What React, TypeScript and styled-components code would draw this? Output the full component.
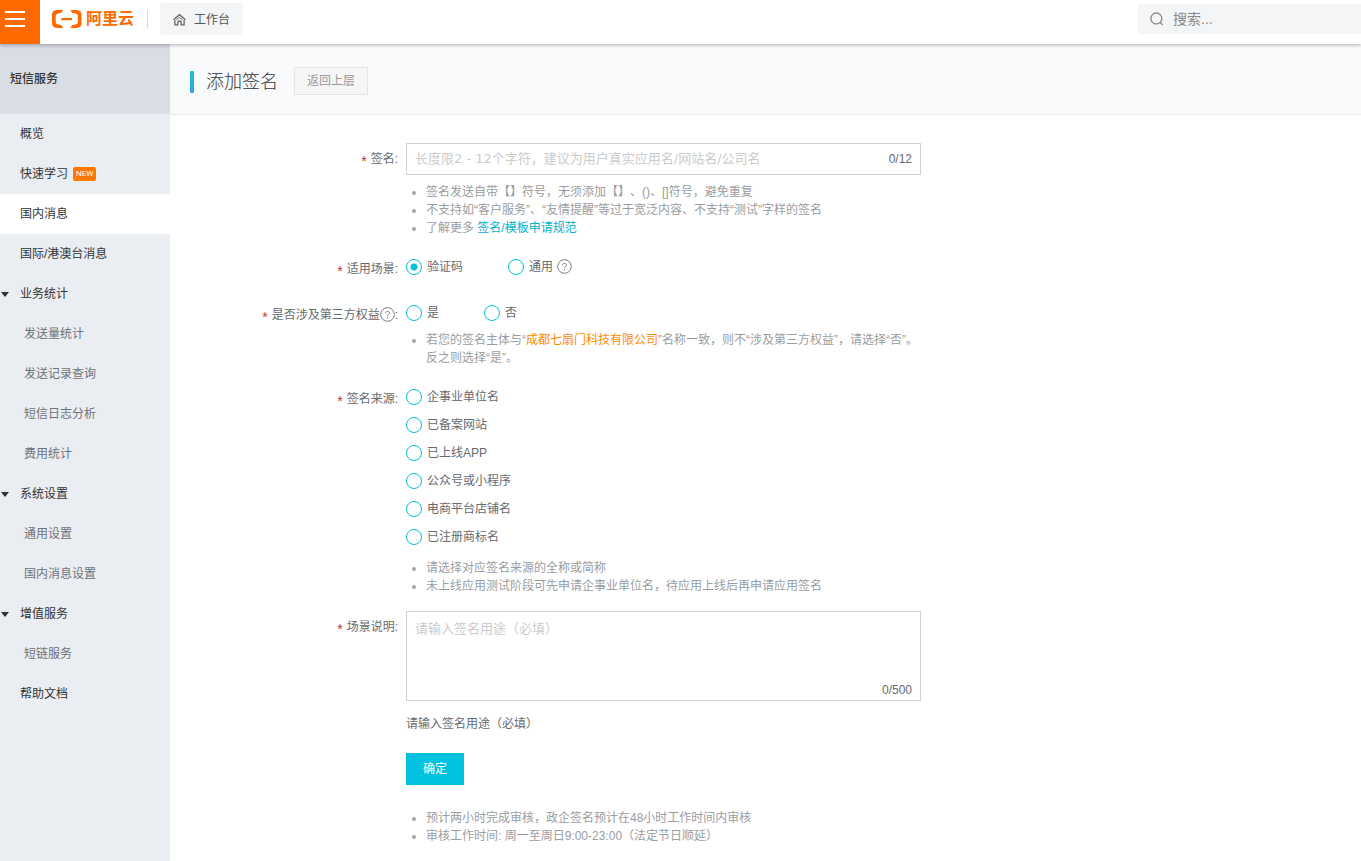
import React, { useState } from "react";
import styled, { createGlobalStyle } from "styled-components";

const GlobalStyle = createGlobalStyle`
  * { box-sizing: border-box; }
  body {
    margin: 0;
    background: #fff;
    color: #666a6e;
    font: 12px/18px "Liberation Sans", "Noto Sans CJK SC", sans-serif;
    text-spacing-trim: space-all;
  }
  button, input, textarea { font: inherit; color: inherit; letter-spacing: inherit; }
  ul { list-style: none; margin: 0; padding: 0; }
  a { text-decoration: none; }
`;

const Page = styled.div`
  display: flex;
  flex-direction: column;
  min-height: 100vh;
`;

const TopBar = styled.header`
  position: relative;
  z-index: 1;
  display: flex;
  align-items: flex-start;
  height: 44px;
  background: #fff;
  box-shadow: 0 1px 4px rgba(0, 0, 0, 0.3);
`;

const MenuButton = styled.button`
  display: flex;
  flex-direction: column;
  gap: 5px;
  width: 40px;
  height: 44px;
  padding: 11px 15px 0 5px;
  border: 0;
  background: #ff6a00;
`;

const MenuBar = styled.span`
  height: 2px;
  background: #fff;
`;

const Logo = styled.a`
  display: flex;
  align-items: center;
  gap: 4px;
  height: 38px;
  margin-left: 12px;
  color: #ff6a00;
  font-size: 16px;
  font-weight: 700;
`;

const Divider = styled.span`
  width: 1px;
  height: 18px;
  margin: 10px 12px 0 13px;
  background: #d5d8db;
`;

const WorkbenchButton = styled.button`
  display: flex;
  align-items: center;
  gap: 8px;
  height: 32px;
  margin-top: 3px;
  padding: 1px 13px 0;
  border: 0;
  border-radius: 2px;
  background: #f4f5f7;
  color: #555;
`;

const SearchBox = styled.label`
  display: flex;
  align-items: center;
  gap: 9px;
  width: 223px;
  height: 30px;
  margin: 4px 0 0 auto;
  padding-left: 12px;
  background: #f4f5f7;
  color: #888;
  font-size: 14px;
`;

const SearchInput = styled.input`
  flex: 1;
  min-width: 0;
  padding: 0;
  border: 0;
  outline: 0;
  background: none;
  &::placeholder { color: #888; opacity: 1; }
`;

const Body = styled.div`
  display: flex;
  flex: 1;
`;

const Sidebar = styled.nav`
  flex: none;
  width: 170px;
  background: #eaedf2;
`;

const SidebarTitle = styled.h2`
  margin: 0;
  height: 70px;
  padding-left: 10px;
  background: #d9dde4;
  color: #333;
  font-size: 12px;
  font-weight: 500;
  line-height: 70px;
`;

type Kind = "page" | "group" | "sub";

const NavLink = styled.a<{ $kind: Kind; $active?: boolean }>`
  display: flex;
  align-items: center;
  height: 40px;
  padding-left: ${(p) => (p.$kind === "page" ? 20 : p.$kind === "sub" ? 24 : 1)}px;
  background: ${(p) => (p.$active ? "#fff" : "transparent")};
  color: ${(p) => (p.$kind === "sub" ? "#6d7277" : "#333")};
`;

const Caret = styled.span`
  margin-right: 11px;
  border: 4px solid transparent;
  border-top: 5px solid #333;
  border-bottom: 0;
`;

const NewBadge = styled.span`
  margin-left: 5px;
  padding: 0 3px;
  border-radius: 2px;
  background: #ff7800;
  color: #fff;
  font-family: Roboto, sans-serif;
  font-size: 8px;
  line-height: 14px;
`;

const Main = styled.main`
  flex: 1;
  min-width: 0;
`;

const PageHeader = styled.div`
  display: flex;
  align-items: center;
  height: 71px;
  padding: 4px 20px 0;
  border-bottom: 1px solid #ebecee;
  background: #f9fafc;
`;

const Title = styled.h1`
  display: flex;
  align-items: center;
  gap: 12px;
  margin: 0 16px 0 0;
  padding-top: 2px;
  color: #333;
  font-size: 18px;
  font-weight: 300;
  line-height: 26px;
  &::before {
    content: "";
    width: 4px;
    height: 22px;
    border-radius: 1px;
    background: linear-gradient(#1cc2d8, #2f9ff0);
  }
`;

const BackButton = styled.button`
  height: 28px;
  padding: 0 12px;
  border: 1px solid #e4e5e6;
  background: #f6f6f6;
  color: #999;
`;

const Form = styled.form`
  display: flex;
  flex-direction: column;
  gap: 16px;
  padding: 28px 20px 16px 0;
`;

const Row = styled.div`
  display: grid;
  grid-template-columns: 228px minmax(0, 515px);
  column-gap: 8px;
  align-items: start;
`;

const RowLabel = styled.div`
  display: flex;
  align-items: center;
  justify-content: flex-end;
  height: 30px;
  padding-top: 2px;
`;

const Required = styled.span`
  margin-right: 4px;
  padding-top: 4px;
  color: #c8321e;
  font-size: 14px;
`;

const Controls = styled.div`
  grid-column: 2;
`;

const Field = styled.div<{ $multi?: boolean }>`
  display: flex;
  flex-direction: ${(p) => (p.$multi ? "column" : "row")};
  align-items: ${(p) => (p.$multi ? "stretch" : "center")};
  height: ${(p) => (p.$multi ? 90 : 32)}px;
  padding: ${(p) => (p.$multi ? "8px 8px 0" : "0 8px")};
  border: 1px solid #cfd2d5;
`;

const placeholderText = `
  flex: 1;
  min-width: 0;
  padding: 0;
  border: 0;
  outline: 0;
  background: none;
  font-family: "DejaVu Sans", "Noto Sans CJK SC", sans-serif;
  font-size: 13px;
  &::placeholder { color: #ccc; opacity: 1; }
`;

const TextInput = styled.input`${placeholderText}`;
const TextArea = styled.textarea`
  ${placeholderText}
  resize: none;
`;

const Counter = styled.span`
  align-self: flex-end;
  line-height: 20px;
  ${Field} > input + & { align-self: center; }
`;

const HintList = styled.ul<{ $gap: number }>`
  margin-top: ${(p) => p.$gap}px;
  color: #999da1;
`;

const HintItem = styled.li`
  display: flex;
  &::before {
    content: "";
    flex: none;
    width: 4px;
    height: 4px;
    margin: 8px 10px 0 6px;
    border-radius: 50%;
    background: #a3a7aa;
  }
`;

const HintLink = styled.a`
  color: #00b1ce;
`;

const Company = styled.span`
  color: #ff8a00;
`;

const RadioGroup = styled.div<{ $vertical?: boolean }>`
  display: flex;
  flex-direction: ${(p) => (p.$vertical ? "column" : "row")};
  column-gap: 45px;
`;

const RadioLabel = styled.label`
  display: flex;
  align-items: center;
  height: 28px;
`;

const RadioInput = styled.input`
  appearance: none;
  width: 16px;
  height: 16px;
  margin: 0 5px 0 0;
  border: 1px solid #00c1de;
  border-radius: 50%;
  background: #fff;
  &:checked { background: radial-gradient(circle, #00c1de 3px, #fff 4px); }
`;

const HelpMark = styled.svg<{ $spaced?: boolean }>`
  flex: none;
  margin: 0 0 2px ${(p) => (p.$spaced ? 4 : 0)}px;
`;

const Note = styled.p`
  margin: 14px 0 20px;
`;

const SubmitButton = styled.button`
  display: block;
  height: 32px;
  padding: 0 17px;
  border: 0;
  background: #00c1de;
  color: #fff;
`;

const HelpIcon = ({ spaced }: { spaced?: boolean }) => (
  <HelpMark $spaced={spaced} width="15" height="15" viewBox="0 0 15 15" fill="none" stroke="#777b7f">
    <circle cx="7.5" cy="7.5" r="6.8" />
    <path d="M5.5 6.2c0-1.3.9-2 2-2s2 .7 2 1.8c0 1.4-2 1.5-2 3M7.5 10v1.2" />
  </HelpMark>
);

const Hints = ({ items, gap = 8 }: { items: React.ReactNode[]; gap?: number }) => (
  <HintList $gap={gap}>
    {items.map((item, i) => (
      <HintItem key={i}>
        <span>{item}</span>
      </HintItem>
    ))}
  </HintList>
);

interface RadiosProps {
  name: string;
  label: string;
  options: string[];
  initial?: string;
  vertical?: boolean;
  helpOn?: string;
}

const Radios = ({ name, label, options, initial = "", vertical, helpOn }: RadiosProps) => {
  const [value, setValue] = useState(initial);
  return (
    <RadioGroup role="radiogroup" aria-label={label} $vertical={vertical}>
      {options.map((o) => (
        <RadioLabel key={o}>
          <RadioInput type="radio" name={name} checked={value === o} onChange={() => setValue(o)} />
          {o}
          {helpOn === o && <HelpIcon spaced />}
        </RadioLabel>
      ))}
    </RadioGroup>
  );
};

const nav: { text: string; kind: Kind; active?: boolean; isNew?: boolean }[] = [
  { text: "概览", kind: "page" },
  { text: "快速学习", kind: "page", isNew: true },
  { text: "国内消息", kind: "page", active: true },
  { text: "国际/港澳台消息", kind: "page" },
  { text: "业务统计", kind: "group" },
  { text: "发送量统计", kind: "sub" },
  { text: "发送记录查询", kind: "sub" },
  { text: "短信日志分析", kind: "sub" },
  { text: "费用统计", kind: "sub" },
  { text: "系统设置", kind: "group" },
  { text: "通用设置", kind: "sub" },
  { text: "国内消息设置", kind: "sub" },
  { text: "增值服务", kind: "group" },
  { text: "短链服务", kind: "sub" },
  { text: "帮助文档", kind: "page" },
];

export default function App() {
  const [sign, setSign] = useState("");
  const [usage, setUsage] = useState("");
  return (
    <Page>
      <GlobalStyle />
      <TopBar>
        <MenuButton type="button" aria-label="菜单">
          <MenuBar />
          <MenuBar />
          <MenuBar />
        </MenuButton>
        <Logo href="#">
          <svg width="30" height="20" viewBox="0 0 30 20" fill="#ff6a00">
            <path d="M11 1H5Q0 1.200 0 6V14Q0 18.800 5 19H11L9.600 16.200 5.300 15.200Q3.700 14.800 3.700 13.200V6.800Q3.700 5.200 5.300 4.800L9.600 3.800Z" />
            <path d="M18.500 1H24.500Q29.500 1.200 29.500 6V14Q29.500 18.800 24.500 19H18.500L19.900 16.200 24.200 15.200Q25.800 14.800 25.800 13.200V6.800Q25.800 5.200 24.200 4.800L19.900 3.800Z" />
            <path d="M9.500 9h10.500v2.200H9.500z" />
          </svg>
          阿里云
        </Logo>
        <Divider />
        <WorkbenchButton type="button">
          <svg width="13" height="13" viewBox="0 0 13 13" fill="none" stroke="#666" strokeWidth="1.3">
            <path d="M.5 6.800 6.500 1.700l6 5.100" />
            <path d="M1.900 7v4.900h2.900V9.500Q4.800 8 6.500 8t1.700 1.500v2.400h2.900V7" />
            <path d="M3.300 6.900 6.500 4.300l3.200 2.600" strokeWidth="1" />
          </svg>
          工作台
        </WorkbenchButton>
        <SearchBox>
          <svg width="14" height="14" viewBox="0 0 14 14" fill="none" stroke="#888" strokeWidth="1.3">
            <circle cx="6.3" cy="6.5" r="5.5" />
            <path d="m10.300 10.500 2.500 2.500" />
          </svg>
          <SearchInput type="search" placeholder="搜索..." aria-label="搜索" />
        </SearchBox>
      </TopBar>
      <Body>
        <Sidebar>
          <SidebarTitle>短信服务</SidebarTitle>
          <ul>
            {nav.map((n) => (
              <li key={n.text}>
                <NavLink href="#" $kind={n.kind} $active={n.active}>
                  {n.kind === "group" && <Caret />}
                  {n.text}
                  {n.isNew && <NewBadge>NEW</NewBadge>}
                </NavLink>
              </li>
            ))}
          </ul>
        </Sidebar>
        <Main>
          <PageHeader>
            <Title>添加签名</Title>
            <BackButton type="button">返回上层</BackButton>
          </PageHeader>
          <Form onSubmit={(e) => e.preventDefault()}>
            <Row>
              <RowLabel>
                <Required>*</Required>
                <label htmlFor="sign">签名:</label>
              </RowLabel>
              <Controls>
                <Field>
                  <TextInput
                    id="sign"
                    maxLength={12}
                    value={sign}
                    onChange={(e) => setSign(e.target.value)}
                    placeholder="长度限2 - 12个字符，建议为用户真实应用名/网站名/公司名"
                  />
                  <Counter>{sign.length}/12</Counter>
                </Field>
                <Hints
                  items={[
                    "签名发送自带【】符号，无须添加【】、()、[]符号，避免重复",
                    "不支持如“客户服务”、“友情提醒”等过于宽泛内容、不支持“测试”字样的签名",
                    <>
                      了解更多 <HintLink href="#">签名/模板申请规范</HintLink>
                    </>,
                  ]}
                />
              </Controls>
            </Row>
            <Row>
              <RowLabel>
                <Required>*</Required>适用场景:
              </RowLabel>
              <Controls>
                <Radios name="scene" label="适用场景" options={["验证码", "通用"]} initial="验证码" helpOn="通用" />
              </Controls>
            </Row>
            <Row>
              <RowLabel>
                <Required>*</Required>是否涉及第三方权益
                <HelpIcon />:
              </RowLabel>
              <Controls>
                <Radios name="third" label="是否涉及第三方权益" options={["是", "否"]} />
                <Hints
                  gap={4}
                  items={[
                    <>
                      若您的签名主体与“<Company>成都七扇门科技有限公司</Company>
                      ”名称一致，则不“涉及第三方权益”，请选择“否”。反之则选择“是”。
                    </>,
                  ]}
                />
              </Controls>
            </Row>
            <Row>
              <RowLabel>
                <Required>*</Required>签名来源:
              </RowLabel>
              <Controls>
                <Radios
                  name="source"
                  label="签名来源"
                  vertical
                  options={["企事业单位名", "已备案网站", "已上线APP", "公众号或小程序", "电商平台店铺名", "已注册商标名"]}
                />
                <Hints
                  items={[
                    "请选择对应签名来源的全称或简称",
                    "未上线应用测试阶段可先申请企事业单位名，待应用上线后再申请应用签名",
                  ]}
                />
              </Controls>
            </Row>
            <Row>
              <RowLabel>
                <Required>*</Required>
                <label htmlFor="usage">场景说明:</label>
              </RowLabel>
              <Controls>
                <Field $multi>
                  <TextArea
                    id="usage"
                    maxLength={500}
                    value={usage}
                    onChange={(e) => setUsage(e.target.value)}
                    placeholder="请输入签名用途（必填）"
                  />
                  <Counter>{usage.length}/500</Counter>
                </Field>
                <Note>请输入签名用途（必填）</Note>
                <SubmitButton type="submit">确定</SubmitButton>
                <Hints
                  gap={24}
                  items={[
                    "预计两小时完成审核，政企签名预计在48小时工作时间内审核",
                    "审核工作时间: 周一至周日9:00-23:00（法定节日顺延）",
                  ]}
                />
              </Controls>
            </Row>
          </Form>
        </Main>
      </Body>
    </Page>
  );
}
